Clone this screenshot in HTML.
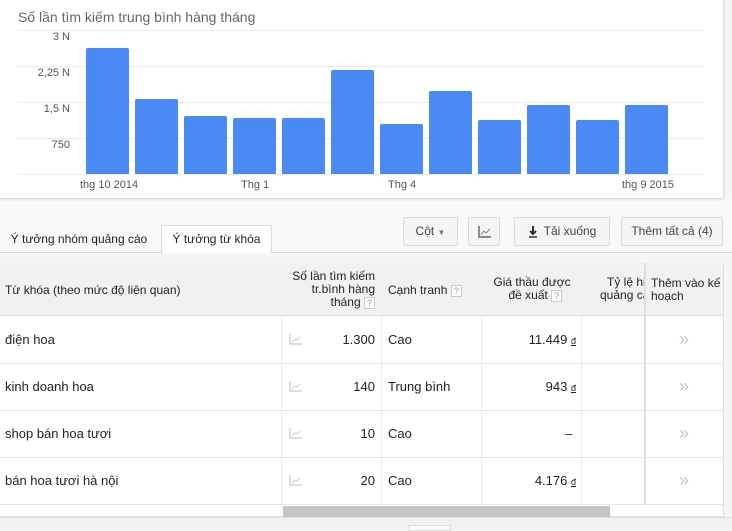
<!DOCTYPE html>
<html><head><meta charset="utf-8"><style>
*{margin:0;padding:0;box-sizing:border-box}
body{width:732px;height:529px;overflow:hidden;background:#f5f5f5;font-family:"Liberation Sans",Arial,sans-serif;font-size:13px;color:#222;position:relative}
.a{position:absolute}
.card{left:-2px;top:-2px;width:726px;height:201px;background:#fff;border:1px solid #ddd;border-radius:2px;box-shadow:0 1px 2px rgba(0,0,0,.1)}
.g{height:1px;background:#ebebeb;left:17px;width:687px}
.bar{background:#4a8af4;border-radius:2px 2px 0 0;width:43px}
.yl{color:#555;font-size:11px;width:70px;text-align:right;left:0}
.xl{color:#555;font-size:11px;top:179px}
.btn{background:#f5f5f5;border:1px solid #dcdcdc;border-radius:2px;font-size:12px;color:#444;text-align:center;line-height:27px;top:217px;height:29px}
.tab{font-size:12px;color:#222;line-height:26px;text-align:center}
.hl{background:#e5e5e5;height:1px}
.tbl{left:0;top:263px;width:724px;height:254px;background:#fff;border:1px solid #e0e0e0;border-left:none}
.hd{left:0;top:263px;width:723px;height:53px;background:#f1f1f1;border-bottom:1px solid #ddd}
.h{font-size:12px;color:#222}
.q{display:inline-block;width:11px;height:12px;border:1px solid #ccc;font-size:9px;color:#999;line-height:10px;text-align:center;vertical-align:middle;background:#fff}
.rl{left:0;width:723px;height:1px;background:#e5e5e5}
.vl{width:1px;background:#ececec;top:316px;height:188px}
.kw{left:5px;font-size:13px}
.c{font-size:13px}
.ic{left:289px;width:13px;height:11px}
.ch{left:679px;color:#c4c4c4;font-size:18px;line-height:18px}
</style></head><body>
<div class="a" style="left:0;top:199px;width:732px;height:54px;background:#f9f9f9"></div>
<div class="a card"></div>
<div class="a" style="left:18px;top:9px;font-size:14px;color:#666">Số lần tìm kiếm trung bình hàng tháng</div>
<div class="a g" style="top:30px"></div>
<div class="a g" style="top:66px"></div>
<div class="a g" style="top:102px"></div>
<div class="a g" style="top:138px"></div>
<div class="a g" style="top:174px"></div>
<div class="a yl" style="top:31px">3 N</div>
<div class="a yl" style="top:67px">2,25 N</div>
<div class="a yl" style="top:103px">1,5 N</div>
<div class="a yl" style="top:139px">750</div>
<div class="a bar" style="left:86px;top:48px;height:126px"></div>
<div class="a bar" style="left:135px;top:99px;height:75px"></div>
<div class="a bar" style="left:184px;top:116px;height:58px"></div>
<div class="a bar" style="left:233px;top:118px;height:56px"></div>
<div class="a bar" style="left:282px;top:118px;height:56px"></div>
<div class="a bar" style="left:331px;top:70px;height:104px"></div>
<div class="a bar" style="left:380px;top:124px;height:50px"></div>
<div class="a bar" style="left:429px;top:91px;height:83px"></div>
<div class="a bar" style="left:478px;top:120px;height:54px"></div>
<div class="a bar" style="left:527px;top:105px;height:69px"></div>
<div class="a bar" style="left:576px;top:120px;height:54px"></div>
<div class="a bar" style="left:625px;top:105px;height:69px"></div>
<div class="a xl" style="left:80px">thg 10 2014</div>
<div class="a xl" style="left:241px">Thg 1</div>
<div class="a xl" style="left:388px">Thg 4</div>
<div class="a xl" style="left:622px">thg 9 2015</div>

<div class="a hl" style="left:0;top:252px;width:732px;background:#d9d9d9"></div>
<div class="a tab" style="left:0;top:226px;width:158px">Ý tưởng nhóm quảng cáo</div>
<div class="a tab" style="left:161px;top:225px;width:111px;height:28px;background:#fff;border:1px solid #d9d9d9;border-bottom:none;border-radius:2px 2px 0 0">Ý tưởng từ khóa</div>
<div class="a btn" style="left:403px;width:55px">Cột <span style="font-size:8px;color:#777">▼</span></div>
<div class="a btn" style="left:468px;width:32px"><svg width="13" height="12" viewBox="0 0 13 12" style="vertical-align:middle"><path d="M1 0V11H13" stroke="#666" stroke-width="1.5" fill="none"/><path d="M3 9L6 5L8 7L12 3" stroke="#888" fill="none"/></svg></div>
<div class="a btn" style="left:514px;width:96px"><svg width="10" height="12" viewBox="0 0 10 12" style="vertical-align:middle;margin-right:6px"><path d="M5 0V7M2 5L5 8L8 5" stroke="#333" stroke-width="2" fill="none"/><path d="M1 11H9" stroke="#333" stroke-width="1.5"/></svg>Tải xuống</div>
<div class="a btn" style="left:621px;width:102px">Thêm tất cả (4)</div>

<div class="a tbl"></div>
<div class="a hd"></div>
<div class="a h" style="left:5px;top:283px">Từ khóa (theo mức độ liên quan)</div>
<div class="a h" style="left:283px;top:270px;width:92px;text-align:right;line-height:13px">Số lần tìm kiếm<br>tr.bình hàng<br>tháng <span class="q">?</span></div>
<div class="a h" style="left:388px;top:283px">Cạnh tranh <span class="q">?</span></div>
<div class="a h" style="left:488px;top:276px;width:88px;text-align:center;line-height:13px">Giá thầu được<br>&nbsp;&nbsp;đề xuất <span class="q">?</span></div>
<div class="a h" style="left:600px;top:276px;width:44px;overflow:hidden;white-space:nowrap;line-height:13px"><div style="margin-left:7px">Tỷ lệ hiển</div><div>quảng cáo</div></div>
<div class="a h" style="left:651px;top:277px;line-height:13px">Thêm vào kế<br>hoạch</div>
<div class="a" style="left:644px;top:263px;width:2px;height:241px;background:#ddd"></div>

<div class="a rl" style="top:363px"></div>
<div class="a rl" style="top:410px"></div>
<div class="a rl" style="top:457px"></div>
<div class="a rl" style="top:504px"></div>
<div class="a vl" style="left:281px"></div>
<div class="a vl" style="left:381px"></div>
<div class="a vl" style="left:481px"></div>
<div class="a vl" style="left:581px"></div>

<div class="a kw" style="top:332px">điện hoa</div>
<div class="a kw" style="top:379px">kinh doanh hoa</div>
<div class="a kw" style="top:426px">shop bán hoa tươi</div>
<div class="a kw" style="top:473px">bán hoa tươi hà nội</div>

<svg class="a ic" style="top:334px" viewBox="0 0 13 11"><path d="M1 0V10H13" stroke="#bbb" fill="none"/><path d="M3 8L6 5L8 6L11 3" stroke="#ccc" fill="none"/></svg>
<svg class="a ic" style="top:381px" viewBox="0 0 13 11"><path d="M1 0V10H13" stroke="#bbb" fill="none"/><path d="M3 8L6 5L8 6L11 3" stroke="#ccc" fill="none"/></svg>
<svg class="a ic" style="top:428px" viewBox="0 0 13 11"><path d="M1 0V10H13" stroke="#bbb" fill="none"/><path d="M3 8L6 5L8 6L11 3" stroke="#ccc" fill="none"/></svg>
<svg class="a ic" style="top:475px" viewBox="0 0 13 11"><path d="M1 0V10H13" stroke="#bbb" fill="none"/><path d="M3 8L6 5L8 6L11 3" stroke="#ccc" fill="none"/></svg>

<div class="a c" style="left:300px;width:75px;text-align:right;top:332px">1.300</div>
<div class="a c" style="left:300px;width:75px;text-align:right;top:379px">140</div>
<div class="a c" style="left:300px;width:75px;text-align:right;top:426px">10</div>
<div class="a c" style="left:300px;width:75px;text-align:right;top:473px">20</div>
<div class="a c" style="left:388px;top:332px">Cao</div>
<div class="a c" style="left:388px;top:379px">Trung bình</div>
<div class="a c" style="left:388px;top:426px">Cao</div>
<div class="a c" style="left:388px;top:473px">Cao</div>
<div class="a c" style="left:480px;width:96px;text-align:right;top:332px">11.449 <span style="font-size:9px;text-decoration:underline">đ</span></div>
<div class="a c" style="left:480px;width:96px;text-align:right;top:379px">943 <span style="font-size:9px;text-decoration:underline">đ</span></div>
<div class="a c" style="left:480px;width:96px;text-align:right;top:426px">–&nbsp;</div>
<div class="a c" style="left:480px;width:96px;text-align:right;top:473px">4.176 <span style="font-size:9px;text-decoration:underline">đ</span></div>
<div class="a ch" style="top:330px">»</div>
<div class="a ch" style="top:377px">»</div>
<div class="a ch" style="top:424px">»</div>
<div class="a ch" style="top:471px">»</div>

<div class="a" style="left:283px;top:506px;width:327px;height:11px;background:#c4c4c4"></div>
<div class="a" style="left:0;top:517px;width:732px;height:12px;background:#f1f1f1;border-top:1px solid #ddd"></div>
<div class="a" style="left:408px;top:525px;width:43px;height:6px;background:#fafafa;border:1px solid #ddd"></div>
</body></html>
